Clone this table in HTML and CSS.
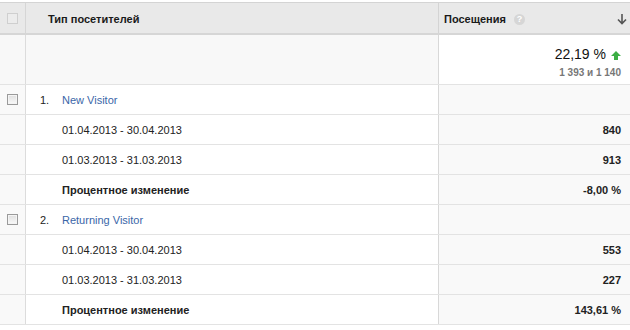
FILE: index.html
```html
<!DOCTYPE html>
<html lang="ru">
<head>
<meta charset="utf-8">
<link rel="stylesheet" href="styles.css">
</head>
<body>
<div class="table">
  <div class="row head">
    <div class="c-check"><span class="hbox"></span></div>
    <div class="c-name"><span class="htitle">Тип посетителей</span></div>
    <div class="c-metric head-metric">
      <span class="htitle">Посещения</span>
      <span class="help">?</span>
      <svg class="sort" width="10" height="12" viewBox="0 0 10 12"><path d="M5 1 V10.5 M1 6.5 L5 10.5 L9 6.5" fill="none" stroke="#555" stroke-width="1.6"/></svg>
    </div>
  </div>

  <div class="row summary">
    <div class="c-check"></div>
    <div class="c-name"></div>
    <div class="c-metric sum-metric">
      <div class="big">22,19 %<svg class="up" width="10" height="9" viewBox="0 0 10 9"><path d="M5 0 L10 5 H7 V9 H3 V5 H0 Z" fill="#3cae45"/></svg></div>
      <div class="small">1 393 и 1 140</div>
    </div>
  </div>

  <div class="row">
    <div class="c-check"><span class="cb"></span></div>
    <div class="c-name"><span class="idx">1.</span><a class="link">New Visitor</a></div>
    <div class="c-metric"></div>
  </div>
  <div class="row">
    <div class="c-check"></div>
    <div class="c-name sub">01.04.2013 - 30.04.2013</div>
    <div class="c-metric num">840</div>
  </div>
  <div class="row">
    <div class="c-check"></div>
    <div class="c-name sub">01.03.2013 - 31.03.2013</div>
    <div class="c-metric num">913</div>
  </div>
  <div class="row">
    <div class="c-check"></div>
    <div class="c-name sub bold">Процентное изменение</div>
    <div class="c-metric num">-8,00 %</div>
  </div>

  <div class="row">
    <div class="c-check"><span class="cb"></span></div>
    <div class="c-name"><span class="idx">2.</span><a class="link">Returning Visitor</a></div>
    <div class="c-metric"></div>
  </div>
  <div class="row">
    <div class="c-check"></div>
    <div class="c-name sub">01.04.2013 - 30.04.2013</div>
    <div class="c-metric num">553</div>
  </div>
  <div class="row">
    <div class="c-check"></div>
    <div class="c-name sub">01.03.2013 - 31.03.2013</div>
    <div class="c-metric num">227</div>
  </div>
  <div class="row">
    <div class="c-check"></div>
    <div class="c-name sub bold">Процентное изменение</div>
    <div class="c-metric num">143,61 %</div>
  </div>
</div>
</body>
</html>
```
FILE: styles.css
```css
html, body {
  margin: 0;
  padding: 0;
  background: #ffffff;
}
body {
  font-family: "Liberation Sans", Arial, sans-serif;
  font-size: 11px;
  color: #222;
}
.table {
  margin-top: 2px;
  width: 630px;
  border-top: 1px solid #d4d4d4;
}
.row {
  display: grid;
  grid-template-columns: 26px 1fr 192px;
  height: 30px;
  box-sizing: border-box;
  border-bottom: 1px solid #e3e3e3;
}
.c-check {
  border-right: 1px solid #dcdcdc;
  background: #f9f9f9;
  display: flex;
  align-items: center;
  justify-content: center;
}
.c-name {
  display: flex;
  align-items: center;
  padding-left: 14px;
  background: #fff;
}
.c-metric {
  border-left: 1px solid #d8d8d8;
  background: #f9f9f9;
  display: flex;
  align-items: center;
  justify-content: flex-end;
  padding-right: 9px;
}

/* header */
.row.head {
  height: 32px;
  background: #e9e9e9;
  border-bottom: 2px solid #d6d6d6;
}
.head .c-check, .head .c-name, .head .c-metric {
  background: #e9e9e9;
  padding-top: 2px;
}
.head .c-check { border-right-color: #d6d6d6; padding-top: 0; }
.head .c-name { padding-left: 22px; }
.head .c-metric {
  justify-content: flex-start;
  padding-left: 5px;
  padding-right: 0;
  border-left-color: #d4d4d4;
}
.htitle {
  font-weight: bold;
  font-size: 11px;
  color: #1a1a1a;
}
.hbox {
  width: 9px;
  height: 9px;
  border: 1px solid #cfcfcf;
  background: #ececec;
}
.help {
  display: inline-flex;
  width: 11px;
  height: 11px;
  border-radius: 50%;
  background: #d6d6d6;
  color: #fff;
  font-size: 9px;
  font-weight: bold;
  align-items: center;
  justify-content: center;
  margin-left: 8px;
}
.sort {
  margin-left: auto;
  margin-right: 3px;
}

/* summary */
.row.summary {
  height: 50px;
}
.summary .c-check, .summary .c-name {
  background: #f8f8f8;
}
.sum-metric {
  background: #fff;
  flex-direction: column;
  align-items: flex-end;
  justify-content: flex-start;
  padding-top: 11px;
}
.big {
  font-size: 14px;
  color: #111;
  line-height: 17px;
  display: flex;
  align-items: center;
}
.up {
  margin-left: 5px;
  margin-top: 1px;
}
.small {
  font-size: 10px;
  font-weight: bold;
  color: #777;
  margin-top: 4px;
}

/* rows */
.cb {
  width: 9px;
  height: 9px;
  border: 1px solid #9a9a9a;
  background: linear-gradient(#dedede, #fafafa);
  box-shadow: inset 0 0 0 1px #f4f4f4;
}
.idx {
  width: 22px;
  color: #222;
  font-size: 11px;
}
.link {
  color: #3a66a8;
  font-size: 11px;
  text-decoration: none;
}
.sub {
  padding-left: 36px;
  font-size: 11px;
  color: #222;
}
.bold { font-weight: bold; }
.num {
  font-weight: bold;
  font-size: 11px;
  color: #222;
}
```
